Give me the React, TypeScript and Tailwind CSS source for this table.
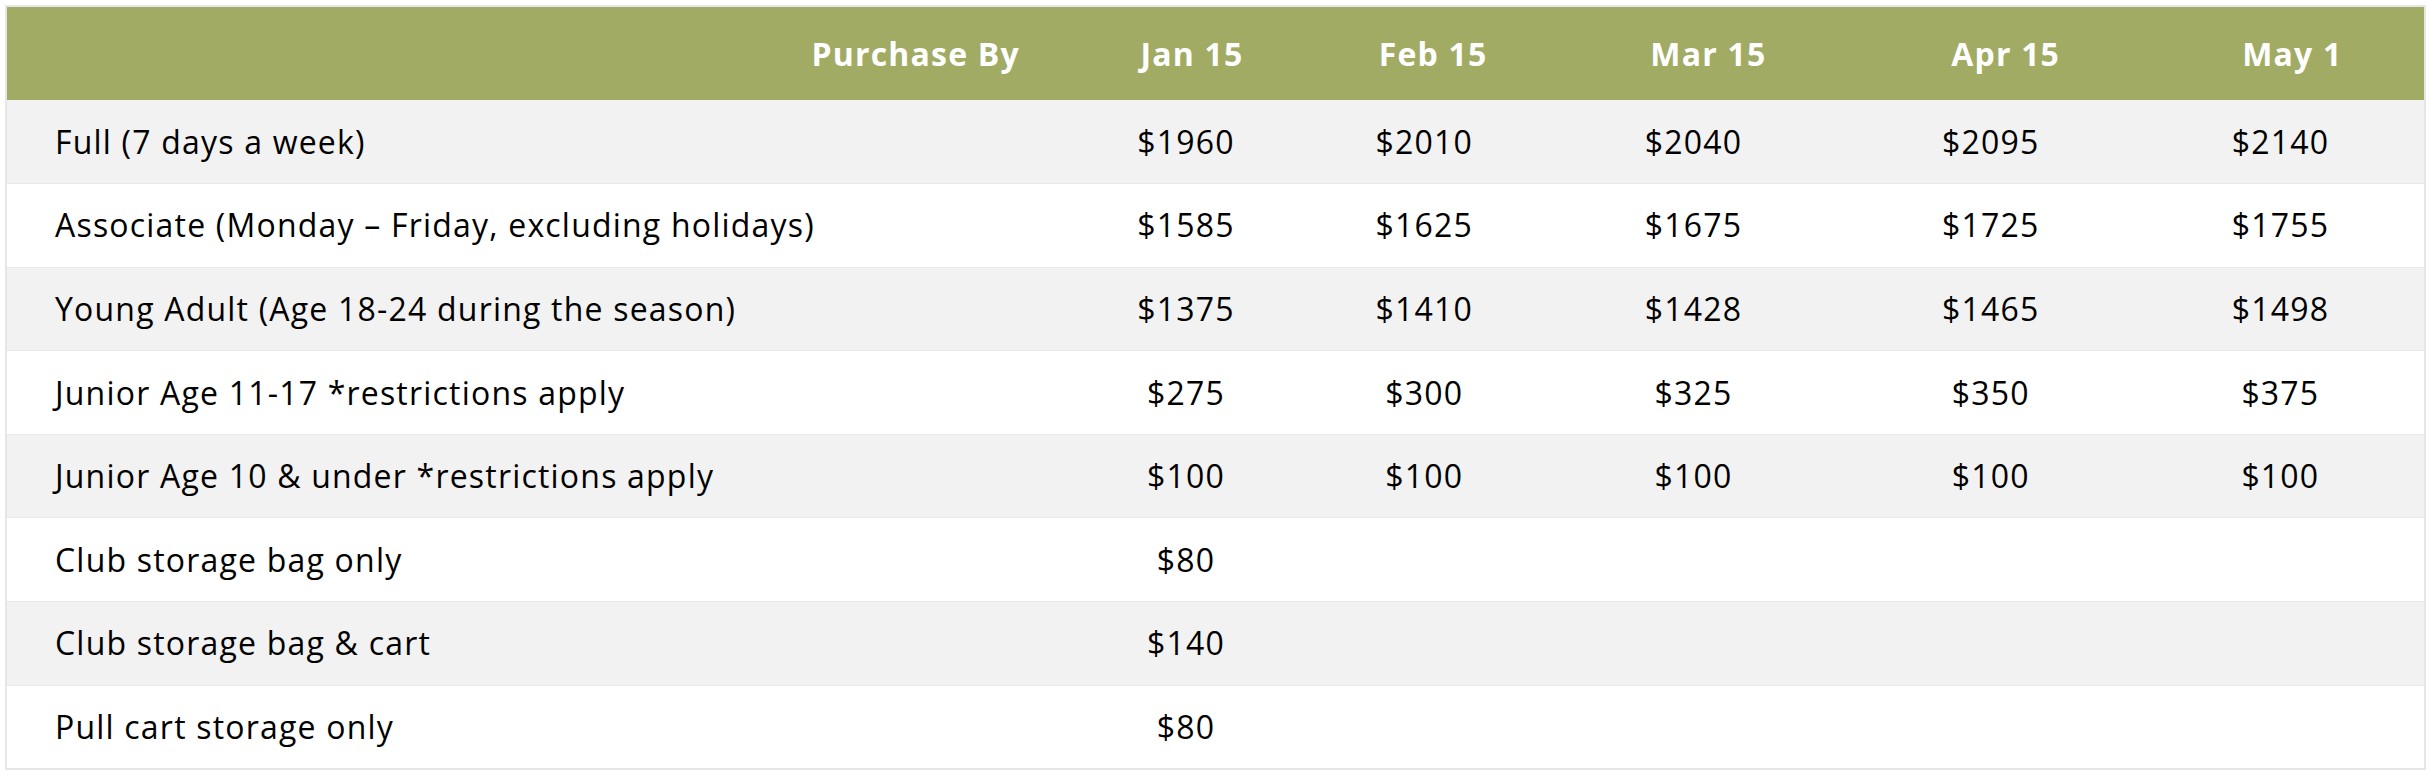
const headers = ["Jan 15", "Feb 15", "Mar 15", "Apr 15", "May 1"];

const rows: { label: string; prices: string[] }[] = [
  { label: "Full (7 days a week)", prices: ["$1960", "$2010", "$2040", "$2095", "$2140"] },
  { label: "Associate (Monday – Friday, excluding holidays)", prices: ["$1585", "$1625", "$1675", "$1725", "$1755"] },
  { label: "Young Adult (Age 18-24 during the season)", prices: ["$1375", "$1410", "$1428", "$1465", "$1498"] },
  { label: "Junior Age 11-17 *restrictions apply", prices: ["$275", "$300", "$325", "$350", "$375"] },
  { label: "Junior Age 10 & under *restrictions apply", prices: ["$100", "$100", "$100", "$100", "$100"] },
  { label: "Club storage bag only", prices: ["$80", "", "", "", ""] },
  { label: "Club storage bag & cart", prices: ["$140", "", "", "", ""] },
  { label: "Pull cart storage only", prices: ["$80", "", "", "", ""] },
];

// data cells sit a little left of their header
const cellPad = ["pr-[12px]", "pr-[18px]", "pr-[30px]", "pr-[30px]", "pr-[24px]"];

export default function App() {
  return (
    <div className="min-h-screen bg-white p-[5px] font-['Open_Sans',sans-serif] text-[32px] tracking-[1.2px] text-black">
      <table className="w-[2421px] table-fixed border-collapse border-2 border-[#e6e6e6]">
        <colgroup>
          <col className="w-[1077px]" />
          <col className="w-[216px]" />
          <col className="w-[266px]" />
          <col className="w-[284px]" />
          <col className="w-[310px]" />
          <col className="w-[264px]" />
        </colgroup>
        <thead>
          <tr className="h-[94px] bg-[#a2ab63] text-white font-bold">
            <th className="pr-[64px] text-right font-bold">Purchase By</th>
            {headers.map((h) => (
              <th key={h} className="text-center font-bold">
                {h}
              </th>
            ))}
          </tr>
        </thead>
        <tbody>
          {rows.map((r, i) => (
            <tr
              key={r.label}
              className={`h-[83.6px] border-b border-[#e9e9e9] ${i % 2 === 0 ? "bg-[#f2f2f2]" : "bg-white"}`}
            >
              <td className="pl-[48px] text-left">{r.label}</td>
              {r.prices.map((p, j) => (
                <td key={j} className={`text-center ${cellPad[j]}`}>
                  {p}
                </td>
              ))}
            </tr>
          ))}
        </tbody>
      </table>
    </div>
  );
}
